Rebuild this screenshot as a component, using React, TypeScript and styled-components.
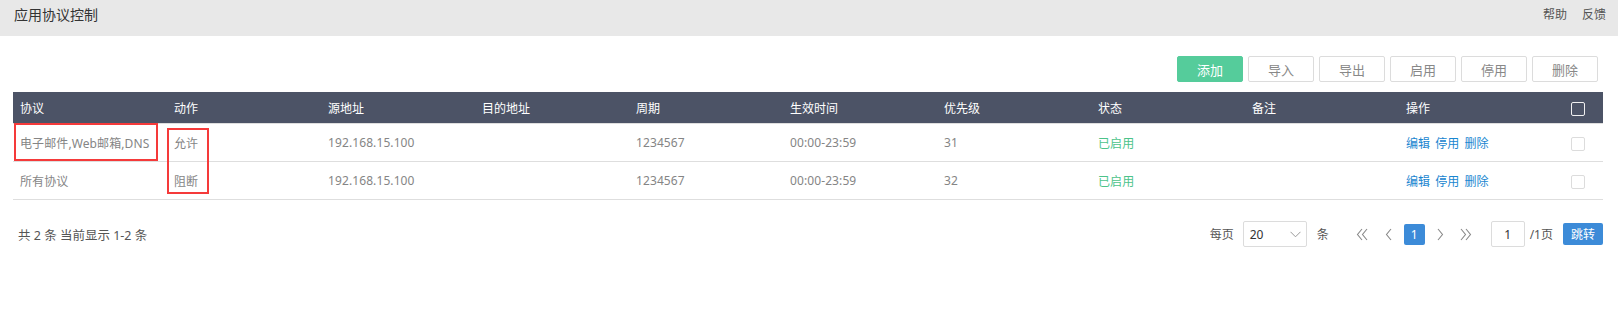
import React from 'react';
import styled, { createGlobalStyle } from 'styled-components';

const GlobalStyle = createGlobalStyle`
    html, body {
        margin: 0;
        padding: 0;
        background: #fff;
        font-family: "Noto Sans", "Noto Sans CJK SC", sans-serif;
        font-size: 12px;
        color: #666;
    }
`;

const Page = styled.div`
    width: 1618px;
    min-height: 331px;
    background: #fff;
`;

const TopBar = styled.div`
    height: 36px;
    background: #e8e8e8;
    display: flex;
    align-items: center;
    justify-content: space-between;
    padding: 0 12px 0 14px;
    box-sizing: border-box;
`;

const Title = styled.div`
    font-size: 14px;
    color: #333;
    line-height: 1;
    margin-top: -6px;
`;

const TopLinks = styled.div`
    display: flex;
    gap: 15px;
    margin-top: -8px;
`;

const TopLink = styled.a`
    font-size: 12px;
    color: #555;
    text-decoration: none;
`;

const Content = styled.div`
    padding: 20px 15px 0 13px;
`;

const Toolbar = styled.div`
    display: flex;
    justify-content: flex-end;
    gap: 5px;
    padding-right: 5px;
    margin-bottom: 10px;
`;

const ToolButton = styled.button<{ $primary?: boolean }>`
    width: 66px;
    height: 26px;
    box-sizing: border-box;
    border-radius: 2px;
    border: 1px solid ${p => (p.$primary ? '#55cc9b' : '#dcdcdc')};
    background: ${p => (p.$primary ? '#55cc9b' : '#fff')};
    color: ${p => (p.$primary ? '#fff' : '#888')};
    font-family: inherit;
    font-size: 13px;
    padding: 0;
    cursor: pointer;
`;

const TableWrap = styled.div`
    position: relative;
    width: 1590px;
`;

const Table = styled.table`
    width: 1590px;
    border-collapse: collapse;
    table-layout: fixed;
`;

const HeadCell = styled.th`
    height: 31px;
    background: #4c5366;
    color: #fff;
    font-weight: normal;
    text-align: left;
    padding: 0 0 0 7px;
    border-bottom: 1px solid #dedede;
    font-size: 12px;
`;

const Cell = styled.td<{ $tone?: 'ok' }>`
    height: 37px;
    padding: 0 0 0 7px;
    border-bottom: 1px solid #dedede;
    color: ${p => (p.$tone === 'ok' ? '#4cc38a' : '#858585')};
    white-space: nowrap;
    font-size: 12px;
    letter-spacing: 0.1px;
`;

const CheckCell = styled.td`
    text-align: center;
    border-bottom: 1px solid #dedede;
    padding: 0;
`;

const CheckHead = styled.th`
    background: #4c5366;
    border-bottom: 1px solid #dedede;
    padding: 0;
`;

const Box = styled.span<{ $dark?: boolean }>`
    display: inline-block;
    width: 14px;
    height: 14px;
    box-sizing: border-box;
    border: 1px solid ${p => (p.$dark ? '#f0f0f0' : '#dcdcdc')};
    border-radius: 2px;
    background: ${p => (p.$dark ? 'transparent' : '#fff')};
    vertical-align: middle;
`;

const OpLink = styled.a`
    color: #1a86d0;
    text-decoration: none;
    margin-right: 5px;
    cursor: pointer;
`;

const Mark = styled.div<{ $l: number; $t: number; $w: number; $h: number }>`
    position: absolute;
    left: ${p => p.$l}px;
    top: ${p => p.$t}px;
    width: ${p => p.$w}px;
    height: ${p => p.$h}px;
    box-sizing: border-box;
    border: 2px solid #f53a3a;
    pointer-events: none;
`;

const Footer = styled.div`
    display: flex;
    align-items: center;
    justify-content: space-between;
    margin-top: 21px;
    padding-left: 5px;
    height: 26px;
`;

const Summary = styled.div`
    color: #555;
    font-size: 12.5px;
`;

const Pager = styled.div`
    display: flex;
    align-items: center;
    color: #555;
`;

const SizeSelect = styled.div`
    width: 64px;
    height: 26px;
    box-sizing: border-box;
    border: 1px solid #dcdcdc;
    border-radius: 2px;
    margin: 0 10px 0 9px;
    display: flex;
    align-items: center;
    justify-content: space-between;
    padding: 0 5px 0 6px;
    color: #333;
`;

const Nav = styled.div`
    display: flex;
    align-items: center;
    gap: 5px;
    margin-left: 23px;
`;

const NavItem = styled.span<{ $active?: boolean }>`
    width: 21px;
    height: 21px;
    border-radius: 2px;
    display: flex;
    align-items: center;
    justify-content: center;
    background: ${p => (p.$active ? '#3c8bd8' : 'transparent')};
    color: ${p => (p.$active ? '#fff' : '#999')};
    font-size: 12px;
`;

const PageInput = styled.div`
    width: 34px;
    height: 26px;
    box-sizing: border-box;
    border: 1px solid #dcdcdc;
    border-radius: 2px;
    margin-left: 14px;
    display: flex;
    align-items: center;
    justify-content: center;
    color: #333;
`;

const PageTotal = styled.span`
    margin: 0 10px 0 5px;
`;

const JumpButton = styled.button`
    width: 40px;
    height: 22px;
    border: none;
    border-radius: 2px;
    background: #3c8bd8;
    color: #fff;
    font-family: inherit;
    font-size: 12px;
    padding: 0;
`;

const Chevron = ({ dir, double }: { dir: 'l' | 'r' | 'd'; double?: boolean }) => {
    if (dir === 'd') {
        return (
            <svg width="11" height="7" viewBox="0 0 11 7">
                <path d="M0.5 0.8 L5.5 5.8 L10.5 0.8" fill="none" stroke="#999" strokeWidth="1" />
            </svg>
        );
    }
    const one = dir === 'l' ? 'M6 1 L1.5 6.5 L6 12' : 'M1 1 L5.5 6.5 L1 12';
    const two = dir === 'l' ? 'M11 1 L6.5 6.5 L11 12' : 'M6 1 L10.5 6.5 L6 12';
    return (
        <svg width={double ? 12 : 7} height="13" viewBox={double ? '0 0 12 13' : '0 0 7 13'}>
            <path d={one} fill="none" stroke="#888" strokeWidth="1.1" />
            {double && <path d={two} fill="none" stroke="#888" strokeWidth="1.1" />}
        </svg>
    );
};

const columns = ['协议', '动作', '源地址', '目的地址', '周期', '生效时间', '优先级', '状态', '备注', '操作'];

const rows = [
    { proto: '电子邮件,Web邮箱,DNS', action: '允许', src: '192.168.15.100', dst: '', cycle: '1234567', time: '00:00-23:59', prio: '31', state: '已启用', note: '' },
    { proto: '所有协议', action: '阻断', src: '192.168.15.100', dst: '', cycle: '1234567', time: '00:00-23:59', prio: '32', state: '已启用', note: '' },
];

function App() {
    return (
        <Page>
            <GlobalStyle />
            <TopBar>
                <Title>应用协议控制</Title>
                <TopLinks>
                    <TopLink>帮助</TopLink>
                    <TopLink>反馈</TopLink>
                </TopLinks>
            </TopBar>
            <Content>
                <Toolbar>
                    <ToolButton $primary>添加</ToolButton>
                    <ToolButton>导入</ToolButton>
                    <ToolButton>导出</ToolButton>
                    <ToolButton>启用</ToolButton>
                    <ToolButton>停用</ToolButton>
                    <ToolButton>删除</ToolButton>
                </Toolbar>
                <TableWrap>
                    <Table>
                        <colgroup>
                            {columns.map(c => <col key={c} style={{ width: 154 }} />)}
                            <col style={{ width: 50 }} />
                        </colgroup>
                        <thead>
                            <tr>
                                {columns.map(c => <HeadCell key={c}>{c}</HeadCell>)}
                                <CheckHead><Box $dark /></CheckHead>
                            </tr>
                        </thead>
                        <tbody>
                            {rows.map(r => (
                                <tr key={r.prio}>
                                    <Cell>{r.proto}</Cell>
                                    <Cell>{r.action}</Cell>
                                    <Cell>{r.src}</Cell>
                                    <Cell>{r.dst}</Cell>
                                    <Cell>{r.cycle}</Cell>
                                    <Cell>{r.time}</Cell>
                                    <Cell>{r.prio}</Cell>
                                    <Cell $tone="ok">{r.state}</Cell>
                                    <Cell>{r.note}</Cell>
                                    <Cell>
                                        <OpLink>编辑</OpLink>
                                        <OpLink>停用</OpLink>
                                        <OpLink>删除</OpLink>
                                    </Cell>
                                    <CheckCell><Box /></CheckCell>
                                </tr>
                            ))}
                        </tbody>
                    </Table>
                    {/* red annotation frames drawn over the screenshot */}
                    <Mark $l={1} $t={31} $w={144} $h={38} />
                    <Mark $l={154} $t={36} $w={42} $h={66} />
                </TableWrap>
                <Footer>
                    <Summary>共 2 条 当前显示 1-2 条</Summary>
                    <Pager>
                        <span>每页</span>
                        <SizeSelect>
                            <span>20</span>
                            <Chevron dir="d" />
                        </SizeSelect>
                        <span>条</span>
                        <Nav>
                            <NavItem><Chevron dir="l" double /></NavItem>
                            <NavItem><Chevron dir="l" /></NavItem>
                            <NavItem $active>1</NavItem>
                            <NavItem><Chevron dir="r" /></NavItem>
                            <NavItem><Chevron dir="r" double /></NavItem>
                        </Nav>
                        <PageInput>1</PageInput>
                        <PageTotal>/1页</PageTotal>
                        <JumpButton>跳转</JumpButton>
                    </Pager>
                </Footer>
            </Content>
        </Page>
    );
}

export default App;
